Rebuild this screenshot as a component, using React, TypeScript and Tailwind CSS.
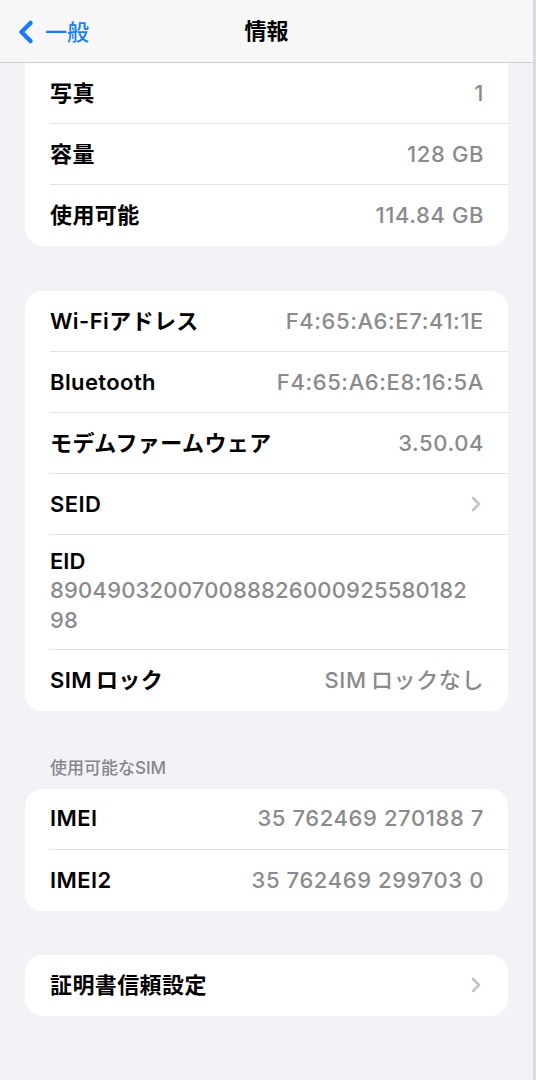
import { ChevronLeft, ChevronRight } from "lucide-react";

interface RowProps {
  label: string;
  value?: string;
  chevron?: boolean;
  last?: boolean;
}

function Row({ label, value, chevron = false, last = false }: RowProps) {
  return (
    <div className="pl-[25px]">
      <div
        className={`flex h-[61px] items-center justify-between pr-[24px] ${
          last ? "" : "border-b border-[#e3e3e6]"
        }`}
      >
        <span className="text-[22px] font-semibold tracking-[0.4px] text-black">{label}</span>
        {value && (
          <span className="text-[22px] font-medium tracking-[0.6px] text-[#8a8a8e]">{value}</span>
        )}
        {chevron && (
          <ChevronRight className="h-6 w-6 text-[#c4c4c7] -mr-1" strokeWidth={2.6} />
        )}
      </div>
    </div>
  );
}

export default function App() {
  return (
    <div
      className="min-h-[1080px] w-[536px] bg-[#f2f2f7] border-r-[3px] border-[#dcdce0]"
      style={{ fontFamily: "Inter, 'Noto Sans CJK JP', sans-serif" }}
    >
      {/* nav bar */}
      <div className="relative flex h-[63px] items-center justify-center bg-[#f7f7f7] border-b border-[#cfcfd2]">
        <div className="absolute left-[8px] top-[14px] flex items-center text-[#1a7cf5]">
          <ChevronLeft className="h-[36px] w-[36px]" strokeWidth={3} />
          <span className="ml-[1px] text-[22px] font-medium">一般</span>
        </div>
        <span className="text-[22px] font-bold text-black">情報</span>
      </div>

      <div className="px-[25px]">
        <div className="rounded-b-[18px] bg-white">
          <Row label="写真" value="1" />
          <Row label="容量" value="128 GB" />
          <Row label="使用可能" value="114.84 GB" last />
        </div>

        <div className="mt-[45px] rounded-[18px] bg-white">
          <Row label="Wi-Fiアドレス" value="F4:65:A6:E7:41:1E" />
          <Row label="Bluetooth" value="F4:65:A6:E8:16:5A" />
          <Row label="モデムファームウェア" value="3.50.04" />
          <Row label="SEID" chevron />
          <div className="pl-[25px]">
            <div className="border-b border-[#e3e3e6] pt-[12px] pb-[14px] pr-[25px]">
              <div className="text-[22px] font-semibold leading-[28px] text-black">EID</div>
              <div className="text-[22px] font-medium leading-[30px] tracking-[0.2px] text-[#8a8a8e]">
                890490320070088826000925580182
                <br />
                98
              </div>
            </div>
          </div>
          <Row label={"SIM\u2009ロック"} value={"SIM\u2009ロックなし"} last />
        </div>

        <div className="mt-[45px] pl-[25px] text-[17px] font-medium text-[#86868b]">
          使用可能なSIM
        </div>
        <div className="mt-[7px] rounded-[18px] bg-white">
          <Row label="IMEI" value="35 762469 270188 7" />
          <Row label="IMEI2" value="35 762469 299703 0" last />
        </div>

        <div className="mt-[44px] rounded-[18px] bg-white">
          <Row label="証明書信頼設定" chevron last />
        </div>
      </div>
    </div>
  );
}
